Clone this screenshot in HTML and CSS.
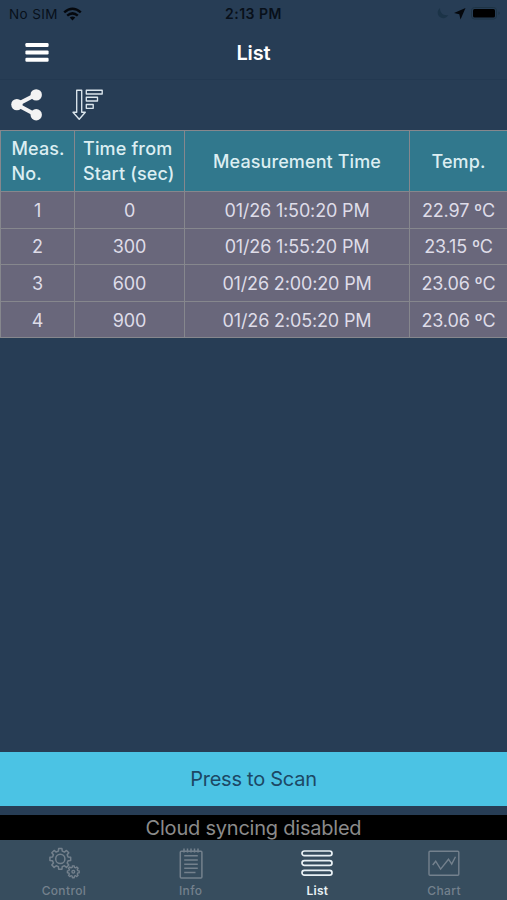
FILE: index.html
```html
<!DOCTYPE html>
<html lang="en">
<head>
<meta charset="utf-8">
<title>List</title>
<link rel="stylesheet" href="styles.css">
</head>
<body>
<div class="app">
  <div class="status">
    <div class="carrier"><span>No SIM</span>
      <svg width="19" height="14" viewBox="0 0 19 14" fill="none" stroke="#05080d" stroke-width="2.5"><path d="M1.2 5.4Q9.5-1.8 17.8 5.4M4.2 8.6Q9.5 4.2 14.8 8.6"/><path d="M9.5 13.4L6.7 10.6Q9.5 8.4 12.3 10.6Z" fill="#05080d" stroke="none"/></svg>
    </div>
    <div class="clock">2:13 PM</div>
    <div class="indicators">
      <svg width="70" height="16" viewBox="0 0 70 16"><path d="M4 2C.5 5 1.200 9.800 4.800 11.500C7.500 12.900 11 12 12.200 9C8 10 3.800 7.500 4 2Z" fill="#1b3347"/><path d="M29.500 2L24.500 13.500L23.300 8.200L18 7Z" fill="#05080d"/><rect x="35.500" y="1.500" width="25" height="11.500" rx="3" fill="none" stroke="#1e3445"/><rect x="37" y="3" width="22" height="8.500" rx="1.500" fill="#000"/><path d="M62.500 5.500Q65 7.200 62.500 9Z" fill="#1e3445"/></svg>
    </div>
  </div>
  <header class="nav">
    <svg class="menu" width="24" height="20" viewBox="0 0 24 20" fill="#fff"><rect x=".4" y="0" width="23.200" height="4" rx="1.200"/><rect x=".4" y="7.400" width="23.200" height="4" rx="1.200"/><rect x=".4" y="14.800" width="23.200" height="4" rx="1.200"/></svg>
    <h1>List</h1>
  </header>
  <div class="tools">
    <svg width="32" height="32" viewBox="0 0 32 32"><path d="M25.800 5.800L6.700 15.600L25.800 25.800" fill="none" stroke="#f3f3f3" stroke-width="4"/><g fill="#f3f3f3"><circle cx="26.200" cy="5.900" r="5.700"/><circle cx="6.900" cy="15.600" r="5.700"/><circle cx="26.200" cy="25.700" r="5.700"/></g></svg>
    <svg class="sort" width="32" height="32" viewBox="0 0 32 32" fill="none" stroke="#dbe5ec" stroke-width="1.350" stroke-linejoin="round"><path d="M5.700 1.200H10.700V23.200H14.300L8.200 30.300L2 23.200H5.700ZM15.300 1.200H31.200V5H15.300ZM15.300 8.200H26.500V12H15.300ZM15.300 15.500H22.200V19.300H15.300Z"/></svg>
  </div>
  <table class="readings">
    <colgroup><col class="c-no"><col class="c-start"><col class="c-time"><col class="c-temp"></colgroup>
    <thead><tr><th class="left no"><span>Meas.<br>No.</span></th><th class="left start"><span>Time from<br>Start (sec)</span></th><th><span>Measurement Time</span></th><th><span>Temp.</span></th></tr></thead>
    <tbody>
      <tr><td>1</td><td>0</td><td>01/26 1:50:20 PM</td><td>22.97 ºC</td></tr>
      <tr><td>2</td><td>300</td><td>01/26 1:55:20 PM</td><td>23.15 ºC</td></tr>
      <tr><td>3</td><td>600</td><td>01/26 2:00:20 PM</td><td>23.06 ºC</td></tr>
      <tr><td>4</td><td>900</td><td>01/26 2:05:20 PM</td><td>23.06 ºC</td></tr>
    </tbody>
  </table>
  <div class="space"></div>
  <button class="scan">Press to Scan</button>
  <div class="sync"><span>Cloud syncing disabled</span></div>
  <nav class="tabs">
    <div class="tab">
      <svg width="32" height="34" viewBox="0 0 32 34" fill="none" stroke="currentColor" stroke-width="1.500" stroke-linejoin="round"><g transform="translate(12.300 12.900)"><path d="M7.760-1.940L10.370-1.640V1.640L7.760 1.940L6.860 4.120L8.490 6.170L6.170 8.490L4.120 6.860L1.940 7.760L1.640 10.370H-1.640L-1.940 7.760L-4.120 6.860L-6.170 8.490L-8.490 6.170L-6.860 4.120L-7.760 1.940L-10.370 1.640V-1.640L-7.760-1.940L-6.860-4.120L-8.490-6.170L-6.170-8.490L-4.120-6.860L-1.940-7.760L-1.640-10.370H1.640L1.940-7.760L4.120-6.860L6.170-8.490L8.490-6.170L6.860-4.120Z"/><circle r="4.600"/></g><g transform="translate(25.300 25.800) scale(.57)" stroke-width="2.400"><path d="M7.760-1.940L10.370-1.640V1.640L7.760 1.940L6.860 4.120L8.490 6.170L6.170 8.490L4.120 6.860L1.940 7.760L1.640 10.370H-1.640L-1.940 7.760L-4.120 6.860L-6.170 8.490L-8.490 6.170L-6.860 4.120L-7.760 1.940L-10.370 1.640V-1.640L-7.760-1.940L-6.860-4.120L-8.490-6.170L-6.170-8.490L-4.120-6.860L-1.940-7.760L-1.640-10.370H1.640L1.940-7.760L4.120-6.860L6.170-8.490L8.490-6.170L6.860-4.120Z"/><circle r="2.400"/></g></svg>
      <span>Control</span>
    </div>
    <div class="tab">
      <svg width="32" height="34" viewBox="0 0 32 34" fill="none" stroke="currentColor" stroke-width="1.500"><rect x="5.300" y="5.300" width="21.600" height="26.600" rx="1"/><path d="M9 2.500V6.500M12.500 2.500V6.500M16 2.500V6.500M19.500 2.500V6.500M23 2.500V6.500M9.200 9.800H22.800M9.200 14H22.800M9.200 18.200H22.800M9.200 22.300H22.800M9.200 26.500H20.500"/></svg>
      <span>Info</span>
    </div>
    <div class="tab active">
      <svg width="32" height="34" viewBox="0 0 32 34" fill="none" stroke="currentColor" stroke-width="1.700"><rect x="1" y="5" width="30" height="4.700" rx="2.350"/><rect x="1" y="14.700" width="30" height="4.700" rx="2.350"/><rect x="1" y="24.400" width="30" height="4.700" rx="2.350"/></svg>
      <span>List</span>
    </div>
    <div class="tab chart">
      <svg width="32" height="34" viewBox="0 0 32 34" fill="none" stroke="currentColor" stroke-width="1.400"><rect x="1" y="5.300" width="29.800" height="24" rx="1"/><path d="M4.700 19L7.700 15.200L12.600 23.100L20.500 13.200L23.700 18.100L27.500 10.700"/></svg>
      <span>Chart</span>
    </div>
  </nav>
</div>
</body>
</html>
```

FILE: styles.css
```css
* { box-sizing: border-box; }
body { margin: 0; background: #273d55; font-family: Inter, "Liberation Sans", sans-serif; }
.app { width: 507px; height: 900px; display: flex; flex-direction: column; overflow: hidden; }
.status { height: 27px; display: grid; grid-template-columns: 1fr auto 1fr; align-items: center; color: #08101a; font-size: 13.5px; }
.carrier { display: flex; align-items: center; gap: 5.5px; letter-spacing: .4px; padding-left: 9px; }
.clock { font-weight: 600; font-size: 14px; letter-spacing: .5px; }
.indicators { display: flex; justify-content: flex-end; padding-right: 1px; }
.indicators svg { display: block; }
.nav { height: 53px; display: grid; grid-template-columns: 1fr auto 1fr; align-items: center; padding: 0 25px 1px; border-bottom: 1px solid #233951; }
.nav h1 { margin: 0; font-size: 20px; font-weight: 600; color: #fff; letter-spacing: -.1px; }
.tools { height: 50px; display: flex; align-items: center; gap: 29px; padding-left: 10px; }
.readings { width: 507px; border-collapse: collapse; table-layout: fixed; color: #dedce8; font-size: 18px; letter-spacing: -.15px; }
.c-no { width: 74px; }
.c-start { width: 110px; }
.c-time { width: 225px; }
.c-temp { width: 98px; }
.readings th, .readings td { border: 1.5px solid #86878d; padding: 0; text-align: center; }
.readings th { height: 61px; background: #31788d; color: #dceef2; font-weight: 500; font-size: 18px; line-height: 25px; letter-spacing: .1px; }
.readings td { height: 36.6px; padding-top: 1px; background: #69677b; }
.readings .left { text-align: left; }
.readings .no { padding-left: 10.5px; }
.readings .start { padding-left: 8px; letter-spacing: .15px; }
.space { flex: 1; }
.scan { height: 54px; border: 0; background: #4bc3e4; color: #1c4865; font: 20px Inter, sans-serif; letter-spacing: -.25px; margin: 0 0 9px; padding: 0; flex: none; }
.sync { height: 25px; flex: none; background: #000; color: #8b8b8b; font-size: 20px; line-height: 26px; letter-spacing: -.22px; text-align: center; }
.tabs { height: 60px; flex: none; display: grid; grid-template-columns: repeat(4, 1fr); background: #374d5e; color: #74818d; }
.tab { display: flex; flex-direction: column; align-items: center; padding: 6px 0 0 1px; font-size: 12px; font-weight: 500; line-height: 15px; letter-spacing: .35px; }
.tab svg { display: block; margin-bottom: 3px; }
.active { color: #e9f1f5; font-weight: 600; letter-spacing: .2px; }
```
